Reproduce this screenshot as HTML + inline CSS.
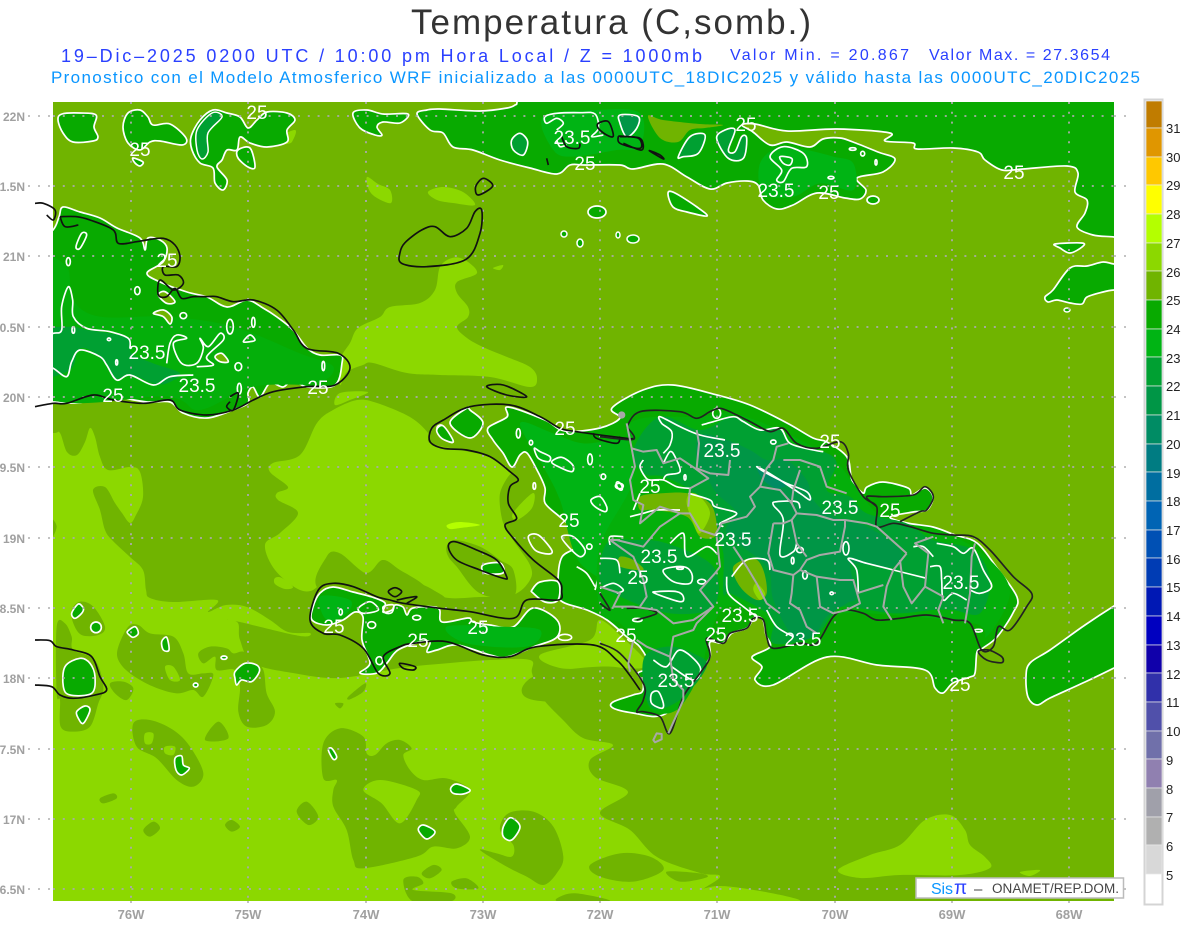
<!DOCTYPE html>
<html><head><meta charset="utf-8"><title>Temperatura</title>
<style>html,body{margin:0;padding:0;background:#fff}svg{display:block}text{font-family:"Liberation Sans",sans-serif}</style></head>
<body>
<svg xmlns="http://www.w3.org/2000/svg" width="1200" height="927" viewBox="0 0 1200 927">
<defs><clipPath id="m"><rect x="53" y="102" width="1061" height="799"/></clipPath></defs>
<rect width="1200" height="927" fill="#fff"/>
<text x="411" y="34" font-size="35" fill="#333" textLength="400" lengthAdjust="spacing">Temperatura (C,somb.)</text>
<text x="61" y="62" font-size="18" fill="#2a40ff" textLength="641" lengthAdjust="spacing">19–Dic–2025 0200 UTC / 10:00 pm Hora Local / Z = 1000mb</text>
<text x="730" y="60" font-size="16" fill="#2a40ff" textLength="179" lengthAdjust="spacing">Valor Min. = 20.867</text>
<text x="929" y="60" font-size="16" fill="#2a40ff" textLength="181" lengthAdjust="spacing">Valor Max. = 27.3654</text>
<text x="51" y="83" font-size="17" fill="#0a96ff" textLength="1089" lengthAdjust="spacing">Pronostico con el Modelo Atmosferico WRF inicializado a las 0000UTC_18DIC2025 y válido hasta las  0000UTC_20DIC2025</text>

<g clip-path="url(#m)">
<rect x="53" y="102" width="1061" height="799" fill="#70b400"/>
<!-- light green layer -->
<g fill="#8cd800">
<polygon points="20,433 53,433 60,433 67,452 77,455 85,442 90,428 95,437 100,457 108,470 130,467 140,472 143,497 136,515 130,523 122,513 115,503 105,487 93,490 100,510 105,530 112,540 130,557 143,570 146,590 150,598 173,602 217,600 208,612 226,605 247,607 270,620 288,632 310,633 300,636 240,622 227,619 238,623 240,640 253,663 293,673 340,678 400,668 450,663 490,660 530,660 532,673 540,695 563,720 583,738 613,745 590,760 595,777 628,792 600,813 630,830 657,857 700,873 720,877 693,898 690,930 20,930 20,600"/>
<polygon points="273,463 300,455 317,423 333,410 357,400 377,403 410,417 428,433 430,443 460,450 490,457 510,472 512,490 510,510 505,525 513,540 530,565 530,580 513,595 480,597 443,597 417,580 400,570 383,560 367,573 345,563 333,553 327,563 317,587 300,590 275,570 265,545 280,533 298,513 278,500 277,493 288,487 270,472"/>
<polygon points="350,343 358,328 380,317 390,307 420,303 435,290 440,267 452,258 465,260 477,273 457,282 457,293 468,307 468,317 457,327 467,338 483,347 507,357 530,367 537,378 530,387 490,377 440,375 407,373 373,363 363,365 347,372 340,385 340,360"/>
<polygon points="340,393 368,392 350,400 335,405"/>
<polygon points="275,578 282,578 293,587 285,589 275,584"/>
<polygon points="513,513 533,493 532,508 517,520"/>
<polygon points="540,655 590,640 600,620 625,640 645,660 642,668 617,668 600,668 560,668"/>
<polygon points="367,177 378,184 390,190 391,203 377,198 369,190"/>
<polygon points="428,192 443,187 463,192 475,205 453,203 437,200"/>
<polygon points="493,268 503,265 500,270"/>
<polygon points="260,142 277,137 295,130 293,140 287,144 263,145"/>
<polygon points="838,870 870,855 900,845 925,820 950,815 965,830 970,845 985,857 990,868 960,875 900,875 860,878"/>
<polygon points="1020,872 1040,870 1030,876"/>
<polygon points="690,901 720,886 800,901"/>
</g>
<polygon points="447,525 460,522 480,525 460,528 450,529" fill="#b4ff00"/>
<!-- dark blobs zoom8 -->
<g transform="translate(40 400) scale(.33333)" fill="#70b400">
<polygon points="95,630 120,605 160,620 195,680 175,705 125,705 100,670"/>
<polygon points="50,680 75,670 95,710 100,750 165,780 190,860 175,910 150,980 100,995 62,980 60,900 50,880"/>
<polygon points="265,680 295,675 330,700 400,710 430,760 445,820 490,820 520,825 490,890 460,870 410,880 340,860 270,820 235,780 235,740"/>
<polygon points="210,850 250,845 280,865 260,900 225,880"/>
<polygon points="475,760 510,740 560,745 580,760 610,755 640,780 670,810 680,880 705,935 680,975 620,980 595,935 600,860 585,810 530,810 525,770 490,790"/>
<polygon points="280,970 330,960 400,990 450,1040 490,1120 460,1160 410,1140 350,1075 290,1040"/>
<polygon points="495,1020 535,965 565,1015"/>
<polygon points="180,1195 220,1180 230,1195 190,1210"/>
<polygon points="310,1290 340,1265 360,1285 330,1310"/>
<polygon points="555,1275 575,1260 600,1280 575,1295"/>
<polygon points="770,1235 800,1205 835,1250 805,1275"/>
<polygon points="20,350 50,380 20,435"/>
<g fill="#8cd800"><polygon points="315,1000 340,1000 335,1030 315,1030"/><polygon points="375,1040 405,1040 400,1065 375,1060"/><polygon points="375,800 400,800 420,840 390,840"/></g>
</g>
<!-- dark blobs zoom9 -->
<g transform="translate(300 640) scale(.33333)" fill="#70b400">
<polygon points="70,310 120,265 190,290 200,340 225,345 260,310 300,300 335,325 310,345 330,390 370,420 440,415 510,450 470,500 465,520 510,590 470,625 400,620 350,650 190,685 160,660 140,570 100,500 100,450 110,420 70,415"/>
<polygon fill="#8cd800" points="190,450 240,420 350,450 350,480 300,550 245,490"/>
<polygon points="600,570 625,520 700,515 760,560 790,650 770,700 730,735 680,710 620,680 540,630 590,640 635,650 640,615"/>
<polygon points="365,700 400,675 425,690 390,715"/>
<polygon points="310,720 350,710 370,730 340,750 455,760 450,785 340,785"/>
<polygon points="455,725 500,715 535,745 470,745"/>
<polygon points="780,770 830,760 930,783 780,785"/>
<polygon points="145,170 195,130 190,155 150,178"/>
<polygon points="105,190 130,190 120,205"/>
<polygon points="870,675 960,640 1050,650 1090,690 1000,725 900,710"/>
<polygon points="1100,695 1200,700 1220,712 1140,725"/>
</g>
<!-- haiti dark patches zoom6 -->
<g transform="translate(300 400) scale(.33333)" fill="#70b400">
<polygon points="440,440 465,420 540,440 600,480 640,510 640,590 540,580 470,500 445,470"/>
<polygon points="600,280 640,220 630,345 610,370"/>
<polygon points="80,470 120,460 200,520 250,480 320,530 400,570 430,600 300,610 60,570"/>
<polygon points="700,830 900,800 1000,820 1050,900 700,900" fill="#70b400"/>
</g>

<!-- 25-contour green regions -->
<g fill="#08aa00" stroke="#fff" stroke-width="1.7" stroke-linejoin="round">
<!-- Cuba -->
<polygon points="35,245 53,230 59,217 63,207 80,212 100,218 117,228 140,238 145,250 148,238 160,240 167,248 163,262 147,273 160,282 187,292 207,297 227,307 247,300 263,308 277,317 293,330 307,348 320,355 340,355 342,363 335,385 307,387 293,380 283,387 270,383 260,397 253,387 248,393 248,403 233,410 207,418 183,413 170,402 147,402 123,398 100,395 83,402 67,403 53,402 35,402"/>
<!-- top -->
<polygon points="58,120 62,114 80,113 96,115 94,127 98,137 93,141 73,142 63,133"/>
<polygon points="123,127 128,113 140,110 148,117 153,125 170,124 186,138 182,145 160,141 150,142 140,150 128,143"/>
<polygon points="133,158 143,162 140,166 135,163"/>
<polygon points="191,137 200,120 213,110 227,113 240,117 248,128 257,120 267,112 287,113 295,120 287,130 287,142 267,147 250,143 240,137 237,150 227,150 222,160 217,167 227,180 223,190 215,183 213,168 200,163 192,150"/>
<polygon points="238,150 250,148 255,167 248,167 238,158"/>
<polygon points="353,113 367,110 383,114 408,114 400,123 383,122 377,127 382,135 375,135 360,128"/>
<polygon points="417,114 430,130 443,133 453,147 473,150 500,160 530,168 557,174 570,165 585,165 620,165 633,169 663,164 687,177 710,189 727,183 747,181 758,185 763,200 777,209 793,205 817,193 845,198 860,199 866,190 857,178 883,172 895,159 878,152 853,142 840,138 823,139 810,147 787,142 770,145 753,132 742,125 755,124 787,131 837,129 890,133 885,141 913,143 917,149 953,148 978,152 985,160 1002,170 1023,169 1067,166 1078,173 1075,192 1087,200 1085,213 1077,227 1093,235 1114,237 1130,240 1130,85 517,85 517,102 515,105 507,108 480,111 440,109 427,110"/>
<polygon points="668,193 675,193 697,207 707,216 687,212 673,207"/>
<ellipse cx="597" cy="212" rx="9" ry="6"/><ellipse cx="873" cy="200" rx="6" ry="4"/>
<polygon points="1045,297 1053,290 1070,268 1087,266 1103,262 1114,264 1130,265 1130,290 1114,290 1103,292 1087,297 1082,304 1070,303 1057,300 1048,302"/>
<polygon points="1055,244 1082,243 1082,247 1070,253 1060,248"/>
<polygon points="1130,597 1114,606 1085,625 1050,650 1030,663 1026,677 1028,697 1037,705 1050,698 1085,682 1114,668 1130,660"/>
<!-- Hispaniola main -->
<polygon points="508,407 545,420 565,431 600,428 620,418 612,408 643,390 673,385 717,395 750,405 787,423 813,438 827,442 847,457 852,480 863,493 867,487 883,482 908,488 912,495 925,488 933,497 927,510 913,512 890,517 907,523 933,527 955,535 977,543 997,568 1017,597 1013,613 997,637 983,648 977,652 975,673 970,677 953,683 943,693 935,688 925,670 877,665 827,657 773,685 755,680 762,667 752,657 770,647 766,635 763,620 755,617 747,628 732,633 723,643 710,642 710,657 700,673 690,690 663,715 633,713 613,708 613,702 633,695 642,692 643,682 638,673 650,667 640,647 627,637 607,620 587,610 560,600 558,580 562,557 578,547 583,537 560,517 545,503 545,488 537,470 527,453 520,455 512,467 503,453 493,440 488,428 507,417"/>
<!-- Tiburon -->
<polygon points="313,607 320,593 333,587 353,592 372,597 385,603 383,612 392,610 395,605 403,607 407,615 413,608 438,608 442,622 468,618 473,622 490,625 513,627 533,608 557,620 557,637 533,647 507,657 490,655 457,645 437,650 427,652 430,642 420,642 398,650 387,663 377,673 360,673 370,663 362,640 363,617 355,612 343,620 327,625 312,620"/>
<!-- NW peninsula -->
<polygon points="450,423 467,408 470,410 483,423 470,438"/>
<polygon points="437,428 443,426 453,442 442,438"/>
<polygon points="483,565 500,563 503,573 485,573"/>
<polygon points="532,590 540,582 558,582 558,600 545,602 533,593"/>
</g>
<g transform="translate(40 400) scale(.33333)" fill="#08aa00" stroke="#fff" stroke-width="5" stroke-linejoin="round">
<polygon points="95,640 115,612 130,625 125,640 105,655"/><ellipse cx="168" cy="682" rx="16" ry="16"/>
<polygon points="75,800 120,775 150,790 165,830 155,880 90,885 70,860"/><polygon points="110,935 135,918 150,930 130,970 115,955"/>
<polygon points="262,695 285,680 295,700 280,712 268,705"/><polygon points="365,725 380,712 387,750 370,750"/>
<ellipse cx="552" cy="773" rx="9" ry="5"/><ellipse cx="467" cy="855" rx="7" ry="6"/>
<polygon points="585,815 615,790 650,795 658,815 635,845 605,840 590,855 585,835"/>
<polygon points="405,1075 425,1068 430,1095 448,1105 425,1125 408,1110"/>
</g>
<g transform="translate(300 640) scale(.33333)" fill="#08aa00" stroke="#fff" stroke-width="5" stroke-linejoin="round">
<polygon points="85,330 95,325 110,350 100,358"/><polygon points="452,445 470,432 510,450 490,462 460,460"/>
<polygon points="355,570 370,555 405,575 380,597"/><polygon points="610,560 632,533 660,560 635,600 610,590"/>
</g>
<g fill="#70b400" stroke="#fff" stroke-width="1.5">
<polygon points="648,116 663,120 700,124 723,125 705,128 690,130 678,142 660,138" stroke="none"/>
<ellipse cx="564" cy="234" rx="3" ry="3" fill="#08aa00"/><ellipse cx="580" cy="243" rx="3" ry="4" fill="#08aa00"/><ellipse cx="618" cy="235" rx="2" ry="3" fill="#08aa00"/><ellipse cx="633" cy="239" rx="6" ry="4" fill="#08aa00"/>
<ellipse cx="1067" cy="310" rx="3" ry="2" fill="#08aa00"/>
</g>

<!-- Cuba internal -->
<g transform="translate(0 100) scale(.33333)">
<polygon fill="#04af0a" points="120,500 200,500 220,600 300,650 500,650 700,680 900,760 1000,800 950,850 760,860 600,930 500,890 120,880"/>
<polygon fill="#00a032" points="120,700 210,680 260,690 330,700 385,715 395,760 460,790 540,820 500,850 460,850 395,825 345,835 315,790 270,750 235,750 210,810 120,825"/>
<g fill="none" stroke="#fff" stroke-width="5" stroke-linejoin="round">
<polyline points="120,710 160,700 185,690 185,620 205,560 218,600 220,650 260,685 330,695 385,715 390,745"/>
<polyline points="120,790 160,805 200,830 215,785 240,750 300,770 320,795 350,840 390,825 460,855 510,830 580,825"/>
<polyline points="500,790 510,730 530,705 560,715 520,730 545,790 590,790 610,745 600,715 625,740 660,700 670,720 620,770 640,795 590,800"/>
<polygon points="460,640 490,630 515,650 510,672 490,650" fill="#70b400"/>
<polygon points="645,770 665,760 685,785 660,785" fill="#70b400"/>
<polygon points="475,585 495,575 525,605 500,610" fill="#70b400"/>
<polygon points="228,440 245,400 260,405 240,445"/>
<ellipse cx="205" cy="485" rx="6" ry="12"/><ellipse cx="412" cy="572" rx="8" ry="12"/><ellipse cx="550" cy="647" rx="10" ry="9"/>
<ellipse cx="220" cy="690" rx="4" ry="10"/><ellipse cx="327" cy="718" rx="5" ry="4"/><ellipse cx="350" cy="787" rx="3" ry="8"/>
<ellipse cx="690" cy="680" rx="10" ry="22"/><ellipse cx="760" cy="667" rx="5" ry="15"/><ellipse cx="715" cy="800" rx="10" ry="12"/>
<polygon points="730,725 750,705 765,720 750,725"/><ellipse cx="970" cy="798" rx="4" ry="14"/><ellipse cx="718" cy="866" rx="6" ry="16"/>
</g>
</g>
<!-- top inner -->
<g transform="translate(340 100) scale(.33333)">
<polygon fill="#00b414" points="610,50 770,30 900,40 900,140 830,150 700,170 640,150"/>
<g stroke="#fff" stroke-width="5" stroke-linejoin="round">
<polygon fill="#00a032" points="515,120 540,100 563,125 550,165 520,150"/>
<polygon fill="#009646" points="840,45 895,50 890,85 860,110 840,70"/>
<polyline fill="none" points="650,90 670,70 650,55 620,70 615,50 650,40 720,38 765,42 775,85 755,110 790,105"/>
<polyline fill="none" points="650,120 660,140 680,135"/>
</g></g>
<polygon fill="#00a032" points="197,130 212,113 222,117 208,133 208,152 202,159 197,150" stroke="#fff" stroke-width="1.5"/>
<g transform="translate(620 100) scale(.33333)">
<polygon fill="#00b414" points="420,190 480,140 560,150 640,170 700,190 700,270 600,250 520,290 430,280"/>
<g stroke="#fff" stroke-width="5" stroke-linejoin="round">
<polygon fill="#00a032" points="175,170 210,110 255,105 235,160 190,170"/>
<polygon fill="#00a032" points="290,115 315,90 345,90 325,150 345,155 365,110 380,115 370,175 325,175"/>
<polygon fill="none" points="450,170 490,140 550,160 560,200 515,205 490,245 470,240 485,210"/>
<polygon fill="none" points="480,170 515,175 510,195 490,190"/>
<ellipse cx="698" cy="147" rx="10" ry="4" fill="none"/><ellipse cx="728" cy="161" rx="6" ry="7" fill="none"/><ellipse cx="768" cy="187" rx="3" ry="8" fill="none"/><ellipse cx="633" cy="233" rx="9" ry="4" fill="none"/>
</g></g>

<!-- Haiti interior -->
<g transform="translate(300 400) scale(.33333)">
<polygon fill="#00b414" points="660,70 760,100 850,130 1000,130 1050,300 1050,560 850,500 780,300 730,200"/>
<polygon fill="#00b414" points="60,590 150,600 140,640 80,660"/>
<polygon fill="#00b414" points="440,680 600,680 720,690 680,740 500,730"/>
<g fill="none" stroke="#fff" stroke-width="5" stroke-linejoin="round">
<ellipse cx="655" cy="100" rx="6" ry="14"/><ellipse cx="693" cy="128" rx="5" ry="7"/>
<polygon points="703,145 720,155 750,170 745,185 715,175"/><polygon points="755,185 785,172 818,195 815,215 775,200"/>
<ellipse cx="870" cy="178" rx="7" ry="16"/><ellipse cx="910" cy="230" rx="7" ry="8"/><ellipse cx="958" cy="258" rx="7" ry="14" transform="rotate(-30 958 258)"/>
<polygon points="873,300 900,290 920,320 915,335 885,320"/>
<ellipse cx="703" cy="258" rx="4" ry="10"/><polygon points="685,410 715,405 755,450 745,462 705,450"/>
<polygon points="785,410 820,410 855,450 840,470 805,440"/><ellipse cx="868" cy="440" rx="8" ry="8"/>
<polyline points="1050,340 1000,355 985,350 1010,320 1050,320"/><polygon points="930,410 990,405 1050,420 1050,445 970,430"/>
<polyline points="885,570 900,525 940,490 985,450"/><polyline points="935,510 970,530 975,580 940,560"/>
<polyline points="830,500 860,520 885,560"/><ellipse cx="122" cy="636" rx="5" ry="9"/><ellipse cx="215" cy="675" rx="12" ry="10"/><ellipse cx="350" cy="653" rx="12" ry="7"/><ellipse cx="795" cy="712" rx="20" ry="9"/>
<ellipse cx="238" cy="782" rx="10" ry="12"/><polygon points="175,625 210,605 235,630 190,640"/>
<polygon points="250,620 280,615 275,638 255,638"/>
<polygon points="410,90 430,78 460,125 425,115" fill="#08aa00"/>
</g></g>

<!-- DR interior -->
<g transform="translate(600 380) scale(.33333)">
<polygon fill="#04af0a" points="90,130 300,110 400,100 560,160 700,240 760,310 830,400 900,430 1060,470 1170,540 1230,640 1160,770 1120,730 800,700 700,710 640,780 520,790 500,720 470,700 380,680 330,760 300,880 230,990 150,985 130,880 160,860 120,790 60,730 0,690 0,500 100,300"/>
<polygon fill="#00a032" points="180,110 300,150 400,110 480,150 540,145 570,190 670,215 710,250 680,330 750,350 800,400 920,430 1000,480 1120,510 1170,600 1140,700 1060,690 1000,690 880,700 740,680 700,700 640,770 520,790 520,720 470,680 390,640 370,640 370,520 345,470 300,380 270,330 190,290 130,280 100,210"/>
<polygon fill="#00a032" points="130,840 200,800 280,820 320,860 240,960 150,980"/>
<polygon fill="#00a032" points="20,490 100,480 200,490 340,560 340,680 210,700 60,650 0,600"/>
<polygon fill="#009646" points="300,165 380,180 450,210 500,240 560,240 620,300 640,360 700,410 800,440 900,510 880,560 770,550 750,560 770,650 740,670 680,710 640,770 580,770 520,660 500,560 380,460 410,400 350,340 320,290 290,240"/>
<polygon fill="#008c64" points="470,260 500,275 560,310 530,325 490,300"/>
<polygon fill="#70b400" points="120,350 180,340 265,340 330,370 350,430 345,470 300,470 260,410 160,390 120,390"/>
<polygon fill="#8cd800" points="270,340 300,350 330,400 300,460 280,430 260,370"/>
<polygon fill="#70b400" points="400,560 460,535 490,570 500,640 470,660 420,620"/>
<polygon fill="#8cd800" points="470,610 495,640 480,660 460,630"/>
<polygon fill="#70b400" points="60,530 100,540 130,570 60,560"/>
<g fill="none" stroke="#fff" stroke-width="5" stroke-linejoin="round">
<polyline points="190,220 210,195 215,155 185,130 180,110 240,140 300,165 375,180"/>
<polyline points="305,135 340,125 400,110 430,125 480,150 540,145 570,190 640,210 670,215"/>
<polyline points="130,240 120,260 135,290 150,300 190,300 230,320 270,325"/>
<polyline points="190,300 200,285 240,275 225,230 210,215 190,250"/>
<polygon points="470,260 500,275 540,300 600,340 630,360 620,335 560,310 500,280"/>
<polyline points="600,385 590,365 530,365 520,375 550,420 540,525 580,515 590,490"/>
<polyline points="980,595 880,570 800,550 745,535 770,570 775,640"/>
<polyline points="90,410 130,400 170,390 240,390"/>
<polyline points="265,340 330,360 345,380 410,400 360,430 370,440"/>
<polyline points="210,490 250,460 260,530 320,500 350,520"/>
<polygon points="190,570 250,560 275,580 270,610 220,605"/>
<polygon points="165,640 170,635 230,635 250,650 240,665"/>
<polyline points="380,590 385,640 430,680 470,710"/>
<polyline points="395,590 440,540 500,540 510,570"/>
<polyline points="500,690 530,740 580,770"/>
<polyline points="990,560 1020,560 1025,600 1030,660 1060,640 1100,660"/>
<polyline points="940,500 970,500 1000,530"/>
<polyline points="1010,490 1060,500 1090,520 1120,505 1150,570 1175,620 1140,640 1110,630"/>
<polygon points="155,940 175,935 190,970 185,985 155,970"/>
<polyline points="160,840 200,860 240,810 300,860 280,900 215,860"/>
<polyline points="120,340 100,390"/>
<ellipse cx="350" cy="100" rx="12" ry="15"/><ellipse cx="520" cy="186" rx="8" ry="6"/><ellipse cx="615" cy="585" rx="7" ry="12"/><ellipse cx="738" cy="505" rx="9" ry="20"/><ellipse cx="578" cy="542" rx="4" ry="10"/><ellipse cx="600" cy="510" rx="10" ry="8"/><ellipse cx="695" cy="640" rx="5" ry="4"/>
<ellipse cx="240" cy="565" rx="10" ry="3"/><ellipse cx="305" cy="605" rx="12" ry="7"/><ellipse cx="58" cy="318" rx="12" ry="8"/><ellipse cx="255" cy="292" rx="3" ry="8"/>
<ellipse cx="1135" cy="752" rx="12" ry="4"/><ellipse cx="112" cy="720" rx="14" ry="5"/>
<polyline points="30,495 30,470 70,470"/>
<polyline points="0,535 50,540 60,580"/><polyline points="0,625 40,610 70,630 50,640"/>
</g></g>

<!-- grid -->
<g stroke="#aaa" stroke-width="1.8" stroke-dasharray="2 7.8" fill="none">
<path d="M131,102V901M248,102V901M366,102V901M483,102V901M600,102V901M717,102V901M835,102V901M952,102V901M1069,102V901"/>
<path d="M53,116H1114M53,186H1114M53,256H1114M53,327H1114M53,397H1114M53,467H1114M53,538H1114M53,608H1114M53,678H1114M53,749H1114M53,819H1114M53,889H1114"/>
</g>
</g>
<!-- outer ticks -->
<g stroke="#bbb" stroke-width="1.8" stroke-dasharray="2 8" fill="none">
<path d="M28,116H53M28,186H53M28,256H53M28,327H53M28,397H53M28,467H53M28,538H53M28,608H53M28,678H53M28,749H53M28,819H53M28,889H53"/>
<path d="M1114,116H1130M1114,186H1130M1114,256H1130M1114,327H1130M1114,397H1130M1114,467H1130M1114,538H1130M1114,608H1130M1114,678H1130M1114,749H1130M1114,819H1130M1114,889H1130"/>
<path d="M131,901V906M248,901V906M366,901V906M483,901V906M600,901V906M717,901V906M835,901V906M952,901V906M1069,901V906"/>
</g>

<!-- coasts -->
<g fill="none" stroke="#111" stroke-width="1.5" stroke-linejoin="round">
<g transform="translate(0 100) scale(.33333)" stroke-width="5">
<polyline points="105,310 130,310 165,330 160,360 140,345"/>
<polyline points="180,350 230,350 270,360 340,390 355,430 410,425 440,420 490,415 525,435 540,470 530,500 490,500 495,525 535,525 550,550 520,570 480,540 475,585 500,590 525,565 545,595 580,590 620,590 650,590 700,605 760,600 830,630 880,690 920,745 1015,760 1050,805 1005,855 920,860 820,875 760,900 700,930 620,945 540,930 510,900 430,910 340,900 280,885 200,910 160,910 105,920"/>
<polyline points="180,350 195,380 235,375"/><polyline points="690,890 715,880 700,930 680,920 690,905"/>
</g>
<g transform="translate(340 100) scale(.33333)" stroke-width="5">
<polygon points="407,260 430,235 458,258 415,285"/>
<polygon points="185,490 180,458 195,428 245,390 285,380 330,410 380,385 405,335 425,330 420,400 378,478 260,500"/>
<polygon points="440,860 490,855 560,890 500,885"/>
<polyline points="665,110 680,140 715,145 720,130"/><polygon points="775,70 805,65 820,108 800,105 775,85"/><polyline points="835,108 895,115 900,145 840,130 835,108"/><polyline points="620,175 625,195"/>
</g>
<g transform="translate(620 100) scale(.33333)" stroke-width="5"><polygon points="88,152 120,165 130,177"/><polyline points="0,110 60,115 65,150 10,130"/></g>
<g transform="translate(40 400) scale(.33333)" stroke-width="5"><polyline points="-15,720 30,722 50,740 100,750 155,770 180,830 200,870 165,885 100,895 60,885 35,860 -15,855"/></g>
<g transform="translate(300 400) scale(.33333)" stroke-width="5">
<polyline points="1000,115 980,115 830,95 780,85 720,50 630,15 510,20 430,60 395,85 390,125 430,145 500,150 570,170 630,215 655,240 630,260 625,310 650,355 615,375 640,415 700,480 775,540 785,575 775,600 680,600 640,655 510,635 420,625 310,610 270,600 230,590 160,560 100,550 55,570 30,660 70,700 120,705 190,745 235,820 270,820 250,770 300,740 340,730 440,725 550,765 630,770 710,740 880,735 950,780 985,820 1020,870"/>
<polygon points="445,440 465,425 530,450 590,480 620,530 610,535 540,510 470,480"/>
<polygon points="265,575 285,563 305,575 285,590"/><polyline points="290,600 350,590 320,610"/><polygon points="300,790 345,800 340,810 310,805"/>
<polyline points="880,100 890,115 950,130 960,110"/>
</g>
<g transform="translate(600 380) scale(.33333)" stroke="#222" stroke-width="5">
<polyline points="80,140 120,95 240,95 290,115 330,95 360,85 400,100 460,130 510,155 550,145 590,190 650,205 720,185 745,220 745,270 790,350 830,380 830,440 880,430 930,440 1000,460 1060,465 1120,470 1170,510 1240,590 1295,640 1280,680 1230,750 1195,740 1180,800 1145,810 1110,730 1060,720 980,705 900,715 830,720 790,700 740,690 700,710 650,790 600,790 520,805 500,770 490,720 460,715 440,745 390,760 370,790 320,775 330,830 300,880 250,950 210,1060 180,1010 130,995 110,995 130,960 130,910 60,820 0,790"/>
<polyline points="830,380 800,350 850,350 940,345 975,320 1000,350 980,390 960,395 900,425"/>
<polygon points="1135,815 1165,810 1205,830 1205,848 1160,840"/>
<polyline points="0,170 100,178 80,140"/>
<polyline points="0,640 30,690 0,670"/><polyline points="80,685 130,685 170,700 110,720"/>
</g>
</g>

<!-- province borders -->
<g class="ns" transform="translate(600 380) scale(.33333)" fill="none" stroke="#a8a8a8" stroke-width="6" stroke-linejoin="round">
<polyline points="80,130 95,205 105,260 90,300 100,360 130,375 120,430 180,380 240,400 270,400 300,450 345,465 365,430 440,410 465,380 450,350 480,320 500,265 520,240 530,200 565,190"/>
<polyline points="95,205 130,215 170,210 190,250 240,235 285,265"/>
<polyline points="290,150 297,190 290,265 330,280 385,285 390,240"/>
<polyline points="270,325 325,295 285,265"/><polyline points="270,325 265,380"/>
<polyline points="480,320 540,330 575,370 590,400 650,405 700,420 735,420 800,430 830,440 920,520"/>
<polyline points="550,240 600,240 660,260 680,320 740,340"/><polyline points="600,270 580,330 575,370"/>
<polyline points="520,430 550,430 575,420 590,400"/>
<polyline points="520,430 505,520 520,570 580,585 600,570 620,540 660,525 720,515 735,440 735,420"/>
<polyline points="575,420 590,490 620,530"/>
<polyline points="580,585 575,640 570,670 600,690 620,740 650,760"/>
<polyline points="600,570 650,590 660,680 700,700 740,690 780,670 760,600 720,600 650,590"/>
<polyline points="920,520 880,570 860,620 850,680 875,720"/><polyline points="770,640 850,615"/>
<polyline points="900,540 910,620 935,670 975,620 985,520 945,490 1000,470"/>
<polyline points="975,620 1030,650 1015,690 1030,730"/><polyline points="1125,490 1115,530 1110,640 1095,730"/>
<polyline points="60,480 30,480 100,530 130,600 140,650 120,680"/><polyline points="50,480 130,500 180,440 240,400"/>
<polyline points="350,470 360,560 345,580 300,630 340,680 290,730 280,750 220,770 210,830 140,800 110,780"/>
<polyline points="400,500 440,560 470,610 500,670 540,700"/>
<polyline points="0,620 60,640 40,680 100,680 170,690 220,730 280,720 340,680"/>
<polyline points="210,830 220,900 250,930 250,960 205,1060"/><polyline points="100,780 85,850 90,875"/>
<polygon points="160,1080 170,1060 185,1062 185,1078 165,1087"/><circle cx="65" cy="105" r="8" fill="#a8a8a8"/>
</g>

<!-- contour labels -->
<g fill="#fff" font-size="19" text-anchor="middle">
<text x="257" y="119">25</text><text x="140" y="156">25</text><text x="167" y="267">25</text><text x="113" y="402">25</text><text x="318" y="394">25</text><text x="585" y="170">25</text><text x="746" y="131">25</text><text x="829" y="199">25</text><text x="1014" y="179">25</text><text x="565" y="435">25</text><text x="830" y="448">25</text><text x="890" y="517">25</text><text x="650" y="493">25</text><text x="569" y="527">25</text><text x="638" y="584">25</text><text x="334" y="633">25</text><text x="418" y="647">25</text><text x="478" y="634">25</text><text x="626" y="642">25</text><text x="716" y="641">25</text><text x="960" y="691">25</text>
<text x="572" y="144">23.5</text><text x="776" y="197">23.5</text><text x="147" y="359">23.5</text><text x="197" y="392">23.5</text><text x="722" y="457">23.5</text><text x="840" y="514">23.5</text><text x="733" y="546">23.5</text><text x="659" y="563">23.5</text><text x="740" y="622">23.5</text><text x="803" y="646">23.5</text><text x="961" y="589">23.5</text><text x="676" y="687">23.5</text>
</g>

<!-- axes labels -->
<g fill="#a0a0a0" font-size="12" font-weight="bold" text-anchor="end">
<text x="25" y="121">22N</text><text x="25" y="191">1.5N</text><text x="25" y="261">21N</text><text x="25" y="332">0.5N</text><text x="25" y="402">20N</text><text x="25" y="472">9.5N</text><text x="25" y="543">19N</text><text x="25" y="613">8.5N</text><text x="25" y="683">18N</text><text x="25" y="754">7.5N</text><text x="25" y="824">17N</text><text x="25" y="894">6.5N</text>
</g>
<g fill="#a0a0a0" font-size="13" font-weight="bold" text-anchor="middle">
<text x="131" y="919">76W</text><text x="248" y="919">75W</text><text x="366" y="919">74W</text><text x="483" y="919">73W</text><text x="600" y="919">72W</text><text x="717" y="919">71W</text><text x="835" y="919">70W</text><text x="952" y="919">69W</text><text x="1069" y="919">68W</text>
</g>

<!-- color bar -->
<rect x="1144.5" y="99.5" width="18" height="805" fill="#fff" stroke="#d4d4d4" stroke-width="2"/>
<g stroke="#e8e8e8" stroke-width=".7">
<rect x="1146" y="101" width="16" height="27" fill="#c07c00"/><rect x="1146" y="128" width="16" height="29" fill="#e09600"/><rect x="1146" y="157" width="16" height="28" fill="#ffc800"/><rect x="1146" y="185" width="16" height="29" fill="#ffff00"/><rect x="1146" y="214" width="16" height="29" fill="#b4ff00"/><rect x="1146" y="243" width="16" height="28" fill="#8cd800"/><rect x="1146" y="271" width="16" height="29" fill="#70b400"/><rect x="1146" y="300" width="16" height="29" fill="#08aa00"/><rect x="1146" y="329" width="16" height="28" fill="#00b414"/><rect x="1146" y="357" width="16" height="29" fill="#00a032"/><rect x="1146" y="386" width="16" height="29" fill="#009646"/><rect x="1146" y="415" width="16" height="29" fill="#008c64"/><rect x="1146" y="444" width="16" height="28" fill="#007c82"/><rect x="1146" y="472" width="16" height="29" fill="#006ea0"/><rect x="1146" y="501" width="16" height="29" fill="#0064b4"/><rect x="1146" y="530" width="16" height="28" fill="#0050b4"/><rect x="1146" y="558" width="16" height="29" fill="#003cb4"/><rect x="1146" y="587" width="16" height="29" fill="#0018b4"/><rect x="1146" y="616" width="16" height="29" fill="#0000c0"/><rect x="1146" y="645" width="16" height="28" fill="#1000aa"/><rect x="1146" y="673" width="16" height="29" fill="#3030aa"/><rect x="1146" y="702" width="16" height="29" fill="#5050aa"/><rect x="1146" y="731" width="16" height="28" fill="#7070aa"/><rect x="1146" y="759" width="16" height="29" fill="#9080b0"/><rect x="1146" y="788" width="16" height="29" fill="#a0a0aa"/><rect x="1146" y="817" width="16" height="28" fill="#b0b0b0"/><rect x="1146" y="845" width="16" height="29" fill="#d8d8d8"/></g>
<g fill="#222" font-size="13">
<text x="1166" y="133">31</text><text x="1166" y="162">30</text><text x="1166" y="190">29</text><text x="1166" y="219">28</text><text x="1166" y="248">27</text><text x="1166" y="277">26</text><text x="1166" y="305">25</text><text x="1166" y="334">24</text><text x="1166" y="363">23</text><text x="1166" y="391">22</text><text x="1166" y="420">21</text><text x="1166" y="449">20</text><text x="1166" y="478">19</text><text x="1166" y="506">18</text><text x="1166" y="535">17</text><text x="1166" y="564">16</text><text x="1166" y="592">15</text><text x="1166" y="621">14</text><text x="1166" y="650">13</text><text x="1166" y="679">12</text><text x="1166" y="707">11</text><text x="1166" y="736">10</text><text x="1166" y="765">9</text><text x="1166" y="794">8</text><text x="1166" y="822">7</text><text x="1166" y="851">6</text><text x="1166" y="880">5</text>
</g>

<!-- credit box -->
<rect x="916" y="878" width="207.5" height="20" fill="#fff" stroke="#bbb" stroke-width="1.5"/>
<text x="931" y="894" font-size="16" fill="#0a96ff" textLength="22" lengthAdjust="spacing">Sis</text>
<text x="954" y="894" font-size="19" fill="#2a40ff">π</text>
<text x="974" y="894" font-size="15" fill="#444">–</text>
<text x="992" y="893" font-size="13.5" fill="#444" textLength="127" lengthAdjust="spacing">ONAMET/REP.DOM.</text>
</svg>
<script>
document.querySelectorAll('svg polygon, svg polyline').forEach(function(el){
  if(el.closest('.ns'))return;
  var n=el.getAttribute('points').trim().split(/[\s]+/).map(function(s){var a=s.split(',');return[+a[0],+a[1]]});
  var closed=el.tagName==='polygon',L=n.length,d='M'+n[0][0]+','+n[0][1];
  function g(i){return closed?n[(i+L)%L]:n[Math.max(0,Math.min(L-1,i))]}
  var m=closed?L:L-1;
  for(var i=0;i<m;i++){
    var p0=g(i-1),p1=g(i),p2=g(i+1),p3=g(i+2);
    d+='C'+(p1[0]+(p2[0]-p0[0])/6).toFixed(1)+','+(p1[1]+(p2[1]-p0[1])/6).toFixed(1)+' '+(p2[0]-(p3[0]-p1[0])/6).toFixed(1)+','+(p2[1]-(p3[1]-p1[1])/6).toFixed(1)+' '+p2[0]+','+p2[1];
  }
  if(closed)d+='Z';
  var q=document.createElementNS('http://www.w3.org/2000/svg','path');
  for(var k=0;k<el.attributes.length;k++){var t=el.attributes[k];if(t.name!=='points')q.setAttribute(t.name,t.value)}
  q.setAttribute('d',d);
  el.parentNode.replaceChild(q,el);
});
</script>
</body></html>
